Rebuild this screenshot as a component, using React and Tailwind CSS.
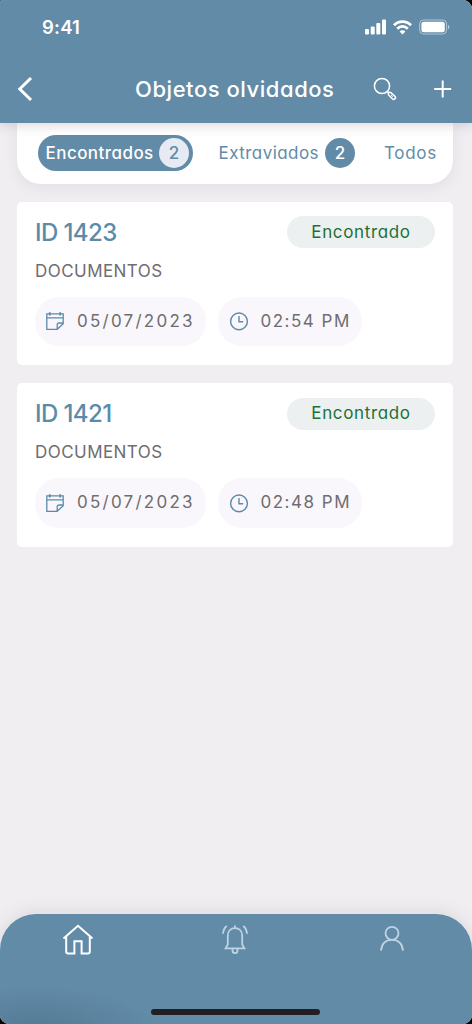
import React from 'react';

const CalendarIcon = () => (
  <svg className="h-[20px] w-[20px] shrink-0 text-[#5b8ba9]" viewBox="0 0 20 20" fill="none" stroke="currentColor" strokeWidth="1.3">
    <path d="M18.2 12V2.8H1.8V18.3H12.2L18.2 12.6V12H14.2Q12.2 12 12.2 14V18.3M1.8 6.8H18.2" />
    <path d="M4.8 1.2V4.4M15.2 1.2V4.4" strokeWidth="1.8" />
  </svg>
);

const ClockIcon = () => (
  <svg className="h-[20px] w-[20px] shrink-0 text-[#5b8ba9]" viewBox="0 0 20 20" fill="none" stroke="currentColor" strokeWidth="1.4">
    <circle cx="10" cy="10.4" r="8.4" />
    <path d="M10 4.9V10.7H14.2" />
  </svg>
);

function StatusBar() {
  return (
    <div className="flex h-[54px] items-center justify-between pl-[42px] pr-[22px] text-white">
      <span className="pt-[1px] text-[18.5px] font-semibold leading-none tracking-[0.2px]">9:41</span>
      <div className="flex items-center gap-[7px]">
        <svg className="h-[16px] w-[21px]" viewBox="0 0 21 16" fill="currentColor">
          <rect x="0" y="10" width="4" height="5.5" rx="1.1" />
          <rect x="5.7" y="7.5" width="4" height="8" rx="1.1" />
          <rect x="11.3" y="4" width="4" height="11.5" rx="1.1" />
          <rect x="17" y="0.5" width="4" height="15" rx="1.1" />
        </svg>
        <svg className="h-[15px] w-[19px]" viewBox="0 0 19 15" fill="none" stroke="currentColor" strokeWidth="2.7">
          <path d="M1 5.2C5.8 .4 13.2 .4 18 5.2" />
          <path d="M4.2 8.7C7.2 5.7 11.8 5.7 14.8 8.7" />
          <path d="M6.6 11.4C8.2 9.8 10.8 9.8 12.4 11.4L9.5 14.5Z" fill="currentColor" stroke="none" />
        </svg>
        <svg className="h-[16px] w-[31px]" viewBox="0 0 31 16" fill="none">
          <rect x="0.6" y="1" width="27" height="14" rx="4" stroke="white" strokeOpacity=".5" strokeWidth="1" />
          <rect x="2.4" y="2.8" width="23.4" height="10.4" rx="2.5" fill="white" />
          <path d="M29 5.8C30.8 6.5 30.8 9.5 29 10.2Z" fill="white" fillOpacity=".6" />
        </svg>
      </div>
    </div>
  );
}

function Header() {
  return (
    <header className="relative z-10 h-[122.5px] shrink-0 bg-[#628ba8] shadow-[0_2px_12px_rgba(60,60,90,0.2)]">
      <StatusBar />
      <div className="flex h-[69px] items-center pl-[17px] pr-[20px] text-white">
        <svg className="h-[26px] w-[16px]" viewBox="0 0 16 26" fill="none" stroke="currentColor" strokeWidth="3">
          <path d="M14 2L2.8 13L14 24" />
        </svg>
        <h1 className="ml-[102px] w-[238px] whitespace-nowrap text-[22px] font-medium leading-none tracking-[0.54px]">Objetos olvidados</h1>
        <svg className="h-[24px] w-[24px]" viewBox="0 0 24 24" fill="none" stroke="currentColor" strokeWidth="1.5">
          <circle cx="9" cy="9" r="7.6" />
          <path d="M14.3 14.3L16.2 16.2" />
          <path d="M15.7 17.9C14.4 16.3 16.2 14.5 17.8 15.7L21.9 19.2C23.6 21 21.2 23.5 19.3 21.8Z" />
          <path d="M18 17.9L19.9 19.7" strokeWidth="1" />
        </svg>
        <svg className="ml-auto h-[18px] w-[18px]" viewBox="0 0 18 18" stroke="currentColor" strokeWidth="2">
          <path d="M8.7 .5V17.5M.2 9H17.2" />
        </svg>
      </div>
    </header>
  );
}

function Tabs() {
  return (
    <nav className="ml-[17px] mr-[19px] flex h-[61px] shrink-0 items-center rounded-b-[24px] bg-white pl-[21px] text-[17px] text-[#628ba8] shadow-[0_4px_14px_rgba(80,70,90,0.08)]">
      <button className="flex h-[36px] w-[154.5px] items-center rounded-full bg-[#628ba8] pl-[7.5px] pr-[2px] font-medium text-white">
        <span className="w-[113.5px] whitespace-nowrap pt-[2px] text-left tracking-[0.45px]">Encontrados</span>
        <span className="flex h-[30px] w-[30px] items-center justify-center rounded-full bg-[#e5eaf3] pt-[1px] text-[#628ba8]">2</span>
      </button>
      <button className="ml-[26px] flex items-center">
        <span className="w-[106.5px] whitespace-nowrap pt-[2px] text-left tracking-[0.45px]">Extraviados</span>
        <span className="flex h-[30px] w-[30px] items-center justify-center rounded-full bg-[#628ba8] pt-[1px] font-medium text-white">2</span>
      </button>
      <button className="ml-[29px] pt-[2px] tracking-[0.7px]">Todos</button>
    </nav>
  );
}

function Card({ id, date, time }) {
  return (
    <article className="h-[163.5px] rounded-[5px] bg-white px-[18px] pt-[14px]">
      <div className="flex h-[33px] items-center justify-between">
        <h2 className="pt-[1px] text-[24px] font-medium leading-none tracking-[-0.6px] text-[#5b8ba9]">{id}</h2>
        <span className="flex h-[32px] w-[148px] items-center justify-center rounded-full bg-[#edf0f0] pt-[1px] text-[17px] tracking-[0.65px] text-[#1d7137]">Encontrado</span>
      </div>
      <p className="mt-[10px] h-[24px] text-[17px] leading-[25px] tracking-[0.45px] text-[#6f6d6f]">DOCUMENTOS</p>
      <div className="mt-[14px] flex gap-[12px] text-[17px] text-[#6f6d6f]">
        <div className="flex h-[49.5px] w-[171px] items-center rounded-[24px] bg-[#f9f7fb] pl-[10px]">
          <CalendarIcon />
          <span className="ml-[12px] whitespace-nowrap tracking-[2.25px]">{date}</span>
        </div>
        <div className="flex h-[49.5px] w-[143.5px] items-center rounded-[24px] bg-[#f9f7fb] pl-[10.5px]">
          <ClockIcon />
          <span className="ml-[12px] whitespace-nowrap tracking-[1.5px]">{time}</span>
        </div>
      </div>
    </article>
  );
}

function BottomNav() {
  return (
    <footer className="relative mt-auto h-[110.5px] shrink-0 rounded-t-[36px] bg-[#628ba8] bg-[radial-gradient(120px_44px_at_36px_116px,rgba(70,105,127,0.5),rgba(98,139,168,0))] shadow-[0_-2px_18px_rgba(80,70,90,0.12)]">
      <div className="flex items-start justify-between pl-[62px] pr-[67px] pt-[10px]">
        <svg className="h-[32px] w-[32px] text-white" viewBox="0 0 32 32" fill="none" stroke="currentColor" strokeWidth="2">
          <path d="M1.5 14.6L16 1.8L30.5 14.6M4.2 12.5V27.5Q4.2 29.5 6.2 29.5H12.4V17.2H19.6V29.5H25.8Q27.8 29.5 27.8 27.5V12.5" />
        </svg>
        <svg className="mr-[4px] h-[32px] w-[28px] text-[#bed4e2]" viewBox="0 0 28 32" fill="none" stroke="currentColor" strokeWidth="1.8">
          <path d="M4.6 24.4H23.4L21.2 20.5V11.8C21.2 7.2 18.5 4.2 14 4.2S6.8 7.2 6.8 11.8V20.5ZM14 4.2V1.4M11.5 25V26.5C11.5 30 16.5 30 16.5 26.5V25M5.8 2C3.4 3.8 2.2 6.5 2 9.8M22.2 2C24.6 3.8 25.8 6.5 26 9.8" />
        </svg>
        <svg className="h-[30px] w-[26px] text-[#bed4e2]" viewBox="0 0 26 30" fill="none" stroke="currentColor" strokeWidth="1.8">
          <circle cx="13" cy="9.3" r="6.5" />
          <path d="M2 26.7C2.7 19.5 6.5 15.9 13 15.9S23.3 19.5 24 26.7" />
        </svg>
      </div>
      <div className="absolute bottom-[9px] left-[151px] h-[6px] w-[169px] rounded-full bg-[#211f22]" />
    </footer>
  );
}

export default function App() {
  return (
    <div className="h-[1024px] w-[472px] overflow-hidden bg-black">
      <div className="flex h-full w-full flex-col overflow-hidden rounded-[9px] rounded-tl-[2px] bg-[#f0eef1] font-['Inter','Liberation_Sans',sans-serif] [font-feature-settings:'cv11'_1]">
        <Header />
        <Tabs />
        <main className="flex flex-col gap-[18px] pl-[17px] pr-[19px] pt-[18px]">
          <Card id="ID 1423" date="05/07/2023" time="02:54 PM" />
          <Card id="ID 1421" date="05/07/2023" time="02:48 PM" />
        </main>
        <BottomNav />
      </div>
    </div>
  );
}
